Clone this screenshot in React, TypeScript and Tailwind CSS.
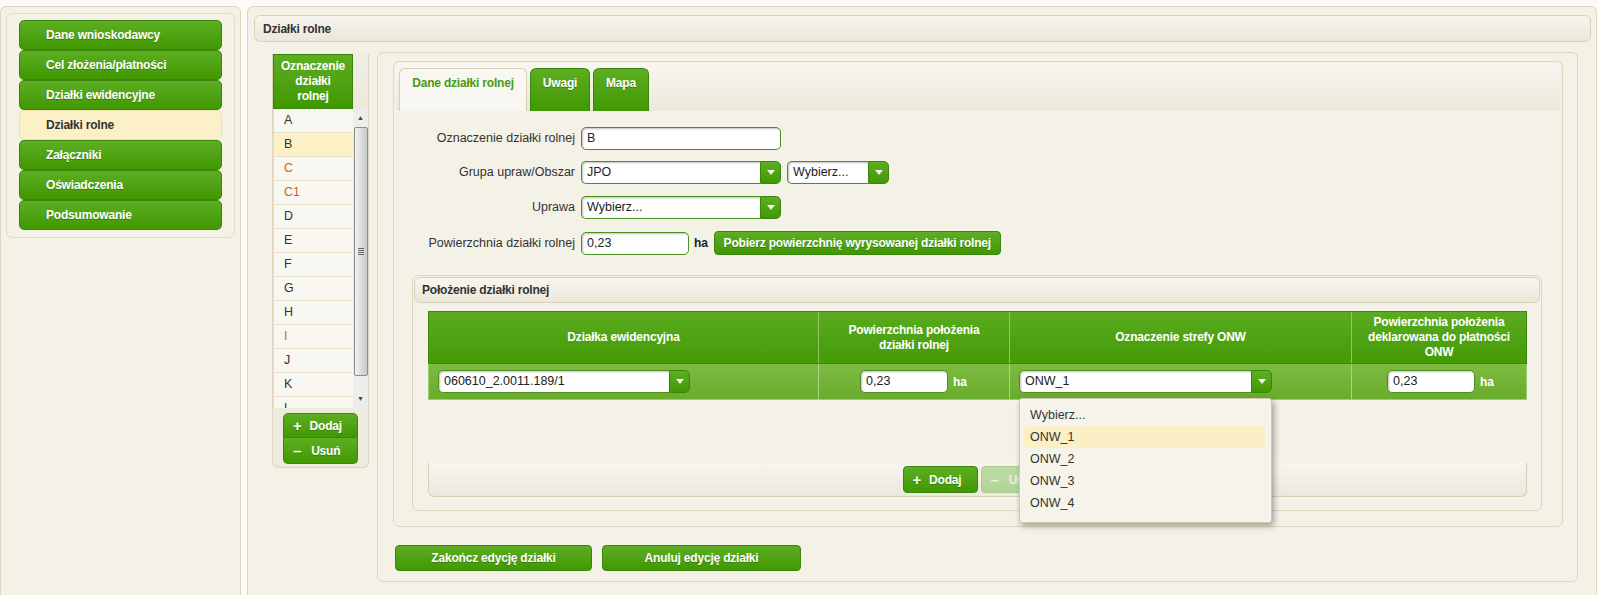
import React from "react";

const greenBtn =
  "bg-linear-to-b from-[#5dae21] to-[#419800] border border-[#3a860c] text-white text-[12px] font-bold tracking-[-0.2px] [text-shadow:0_1px_0_rgba(0,0,0,0.25)]";
const narrowBold = "font-bold text-[12px] tracking-[-0.2px]";
const panelBar =
  "bg-linear-to-b from-[#f7f5ef] to-[#ebe7da] border border-[#d9d1ba] rounded-[6px]";

function Arrow() {
  return (
    <svg width="8" height="5" viewBox="0 0 8 5">
      <path d="M0 0h8L4 5z" fill="#eef5e6" />
    </svg>
  );
}

function Select({ w, text }: { w: string; text: string }) {
  return (
    <div className={"flex h-[23px] " + w}>
      <div className="flex-1 flex items-center bg-white border border-r-0 border-[#4f8f22] rounded-l-[5px] pl-[5px] shadow-[inset_1px_1px_2px_rgba(0,0,0,0.25)] text-[#222] truncate">
        {text}
      </div>
      <div className="w-[21px] flex items-center justify-center bg-linear-to-b from-[#5dae21] to-[#419800] border border-[#3a860c] rounded-r-[5px]">
        <Arrow />
      </div>
    </div>
  );
}

function Input({ w, text }: { w: string; text: string }) {
  return (
    <div className={"h-[23px] flex items-center bg-white border border-[#4f8f22] rounded-[5px] pl-[5px] shadow-[inset_1px_1px_2px_rgba(0,0,0,0.25)] text-[#222] " + w}>
      {text}
    </div>
  );
}

const nav = [
  "Dane wnioskodawcy",
  "Cel złożenia/płatności",
  "Działki ewidencyjne",
  "Działki rolne",
  "Załączniki",
  "Oświadczenia",
  "Podsumowanie",
];

const plots = [
  { n: "A" },
  { n: "B", sel: true },
  { n: "C", warn: true },
  { n: "C1", warn: true },
  { n: "D" },
  { n: "E" },
  { n: "F" },
  { n: "G" },
  { n: "H" },
  { n: "I", warn: true },
  { n: "J" },
  { n: "K" },
  { n: "L" },
];

function Label({ children }: { children: React.ReactNode }) {
  return <div className="w-[187px] text-right pr-[6px] text-[#333]">{children}</div>;
}

export default function App() {
  return (
    <div className="w-[1599px] h-[595px] overflow-hidden bg-[#fcfbf7] flex items-start text-[12.5px] text-[#333] font-['Liberation_Sans',Arial,sans-serif]">
      {/* lewy panel */}
      <aside className="mt-[6px] w-[241px] h-[600px] bg-[#f4f1e6] border border-[#ddd6c0] rounded-[6px] pt-[6px] px-[5px]">
        <div className="border border-[#e2dbc6] rounded-[6px] px-[12px] pt-[6px] pb-[7px]">
          {nav.map((n) =>
            n === "Działki rolne" ? (
              <div
                key={n}
                className={"h-[30px] flex items-center pl-[26px] rounded-[5px] bg-[#fbf0c6] border border-[#efe2b0] text-[#333] " + narrowBold}
              >
                {n}
              </div>
            ) : (
              <div key={n} className={"h-[30px] flex items-center pl-[26px] rounded-[5px] " + greenBtn}>
                {n}
              </div>
            )
          )}
        </div>
      </aside>

      {/* główny panel */}
      <main className="ml-[6px] mt-[6px] w-[1350px] h-[600px] bg-[#f4f1e6] border border-[#ddd6c0] rounded-[6px] pt-[8px] pl-[6px] pr-[5px]">
        <div className={"h-[27px] flex items-center pl-[8px] text-[#333] " + panelBar + " " + narrowBold}>
          Działki rolne
        </div>

        <div className="flex items-start mt-[10px]">
          {/* lista działek */}
          <div className="ml-[18px] mt-[2px] w-[97px] h-[414px] border border-t-0 border-[#ddd6c0] rounded-b-[6px] bg-linear-to-b from-[#f4f1e6] to-[#eeeadd] flex flex-col">
            <div className="flex h-[55px]">
              <div className={"w-[80px] flex items-center justify-center text-center leading-[15px] bg-linear-to-b from-[#5dae21] to-[#419800] border border-[#3a860c] text-white " + narrowBold}>
                Oznaczenie
                <br />
                działki
                <br />
                rolnej
              </div>
              <div className="flex-1 bg-linear-to-b from-[#f1eee5] to-[#ece8dc]" />
            </div>
            <div className="flex h-[299px]">
              <div className="w-[81px] overflow-hidden bg-[#f8f7f1]">
                {plots.map((p) => (
                  <div
                    key={p.n}
                    className={
                      "h-[24px] shrink-0 flex items-center pl-[10px] border-b border-l border-[#e6dfca] " +
                      (p.sel ? "bg-[#fbf0c6] " : "") +
                      (p.warn ? "text-[#d1601f]" : "text-[#333]")
                    }
                  >
                    {p.n}
                  </div>
                ))}
              </div>
              <div className="w-[15px] bg-[#ededeb] flex flex-col items-center">
                <div className="h-[18px] flex items-center justify-center text-[7px] text-[#444]">▲</div>
                <div className="w-[14px] h-[249px] rounded-[2px] border border-[#8c8c8c] bg-linear-to-r from-[#f2f2f2] to-[#c9c9c9] flex items-center justify-center">
                  <div className="flex flex-col gap-[1px]">
                    <div className="w-[6px] h-[1px] bg-[#666]" />
                    <div className="w-[6px] h-[1px] bg-[#666]" />
                    <div className="w-[6px] h-[1px] bg-[#666]" />
                    <div className="w-[6px] h-[1px] bg-[#666]" />
                  </div>
                </div>
                <div className="mt-auto h-[18px] flex items-center justify-center text-[7px] text-[#444]">▼</div>
              </div>
            </div>
            <div className="pl-[10px] pt-[5px]">
              <div className={"w-[75px] h-[25px] flex items-center pl-[9px] gap-[8px] rounded-t-[5px] " + greenBtn}>
                <span className="text-[15px] leading-none">+</span>
                <span>Dodaj</span>
              </div>
              <div className={"w-[75px] h-[26px] flex items-center pl-[9px] gap-[10px] rounded-b-[5px] border-t-0 " + greenBtn}>
                <span className="text-[15px] leading-none">–</span>
                <span>Usuń</span>
              </div>
            </div>
          </div>

          {/* prawy panel */}
          <div className="ml-[8px] w-[1201px] h-[530px] border border-[#ddd6c0] rounded-[6px] bg-[#f4f1e6]">
            <div className="ml-[15px] mt-[8px] w-[1170px] h-[466px] border border-[#ddd6c0] rounded-[6px] bg-[#f4f1e6]">
              {/* zakładki */}
              <div className="mx-[2px] mt-[1px] h-[48px] rounded-t-[5px] bg-linear-to-b from-[#f8f6f0] to-[#ece8dc] flex items-end pl-[3px] gap-[3px]">
                <div className={"w-[128px] h-[43px] rounded-t-[6px] bg-[#f8f7f1] border border-b-0 border-[#d6ceb6] text-[#4a9a12] text-center pt-[5px] " + narrowBold}>
                  Dane działki rolnej
                </div>
                <div className={"w-[60px] h-[43px] rounded-t-[6px] text-center pt-[5px] border-b-0 " + greenBtn}>Uwagi</div>
                <div className={"w-[56px] h-[43px] rounded-t-[6px] text-center pt-[5px] border-b-0 " + greenBtn}>Mapa</div>
              </div>

              {/* formularz */}
              <div className="pt-[16px]">
                <div className="flex items-center h-[23px]">
                  <Label>Oznaczenie działki rolnej</Label>
                  <Input w="w-[200px]" text="B" />
                </div>
                <div className="flex items-center h-[24px] mt-[10px]">
                  <Label>Grupa upraw/Obszar</Label>
                  <Select w="w-[200px]" text="JPO" />
                  <div className="ml-[6px]">
                    <Select w="w-[102px]" text="Wybierz..." />
                  </div>
                </div>
                <div className="flex items-center h-[23px] mt-[12px]">
                  <Label>Uprawa</Label>
                  <Select w="w-[200px]" text="Wybierz..." />
                </div>
                <div className="flex items-center h-[24px] mt-[12px]">
                  <Label>Powierzchnia działki rolnej</Label>
                  <Input w="w-[108px]" text="0,23" />
                  <span className={"ml-[5px] text-[#222] " + narrowBold}>ha</span>
                  <div className={"ml-[6px] h-[24px] px-[9px] flex items-center rounded-[4px] " + greenBtn}>
                    Pobierz powierzchnię wyrysowanej działki rolnej
                  </div>
                </div>

                {/* położenie */}
                <div className="relative ml-[18px] mt-[20px] w-[1130px] h-[236px] border border-[#ddd6c0] rounded-[6px] p-[1px]">
                  <div className={"h-[26px] flex items-center pl-[7px] " + panelBar + " " + narrowBold}>
                    Położenie działki rolnej
                  </div>
                  <div className="ml-[14px] mt-[8px] w-[1099px]">
                    <div className={"flex h-[53px] bg-linear-to-b from-[#5aab1f] to-[#449b02] border border-[#3d880f] text-white text-center leading-[15px] " + narrowBold}>
                      <div className="w-[390px] flex items-center justify-center border-r border-[#8fc766]">Działka ewidencyjna</div>
                      <div className="w-[191px] flex items-center justify-center border-r border-[#8fc766]">
                        Powierzchnia położenia
                        <br />
                        działki rolnej
                      </div>
                      <div className="w-[342px] flex items-center justify-center border-r border-[#8fc766]">Oznaczenie strefy ONW</div>
                      <div className="flex-1 flex items-center justify-center">
                        Powierzchnia położenia
                        <br />
                        deklarowana do płatności
                        <br />
                        ONW
                      </div>
                    </div>
                    <div className="flex h-[36px] bg-linear-to-b from-[#7dbb42] to-[#69ac2c] border-x border-b border-[#9ccb74]">
                      <div className="w-[390px] flex items-center pl-[9px] border-r border-[#a9d484]">
                        <Select w="w-[252px]" text="060610_2.0011.189/1" />
                      </div>
                      <div className="w-[191px] flex items-center pl-[41px] border-r border-[#a9d484]">
                        <Input w="w-[88px]" text="0,23" />
                        <span className={"ml-[5px] text-white " + narrowBold}>ha</span>
                      </div>
                      <div className="w-[342px] flex items-center pl-[9px] border-r border-[#a9d484]">
                        <Select w="w-[253px]" text="ONW_1" />
                      </div>
                      <div className="flex-1 flex items-center pl-[35px]">
                        <Input w="w-[88px]" text="0,23" />
                        <span className={"ml-[5px] text-white " + narrowBold}>ha</span>
                      </div>
                    </div>
                    <div className="mt-[63px] h-[34px] border-x border-b border-[#d6ceb6] rounded-b-[6px] bg-linear-to-b from-[#f7f5ef] to-[#ece8dc] flex items-center justify-center gap-[3px]">
                      <div className={"w-[75px] h-[27px] flex items-center pl-[9px] gap-[8px] rounded-[4px] " + greenBtn}>
                        <span className="text-[15px] leading-none">+</span>
                        <span>Dodaj</span>
                      </div>
                      <div className={"w-[72px] h-[27px] flex items-center pl-[9px] gap-[10px] rounded-[4px] bg-linear-to-b from-[#bcdba3] to-[#b2d498] border border-[#a7cc8b] text-[#eaf4e0] " + narrowBold}>
                        <span className="text-[15px] leading-none">–</span>
                        <span>Usuń</span>
                      </div>
                    </div>
                  </div>

                  {/* rozwinięta lista */}
                  <div className="absolute left-[606px] top-[122px] w-[253px] h-[125px] bg-[#f6f4ea] border border-[#cfc9b6] rounded-[3px] shadow-[2px_3px_6px_rgba(0,0,0,0.35)] pt-[5px] px-[4px]">
                    <div className="h-[22px] flex items-center pl-[6px] text-[#333]">Wybierz...</div>
                    <div className="h-[22px] flex items-center pl-[6px] text-[#333] bg-[#fbefc5] rounded-[5px] w-[242px]">ONW_1</div>
                    <div className="h-[22px] flex items-center pl-[6px] text-[#333]">ONW_2</div>
                    <div className="h-[22px] flex items-center pl-[6px] text-[#333]">ONW_3</div>
                    <div className="h-[22px] flex items-center pl-[6px] text-[#333]">ONW_4</div>
                  </div>
                </div>
              </div>
            </div>

            <div className="flex gap-[10px] ml-[17px] mt-[18px]">
              <div className={"w-[197px] h-[26px] flex items-center justify-center rounded-[4px] " + greenBtn}>
                Zakończ edycję działki
              </div>
              <div className={"w-[199px] h-[26px] flex items-center justify-center rounded-[4px] " + greenBtn}>
                Anuluj edycję działki
              </div>
            </div>
          </div>
        </div>
      </main>
    </div>
  );
}
